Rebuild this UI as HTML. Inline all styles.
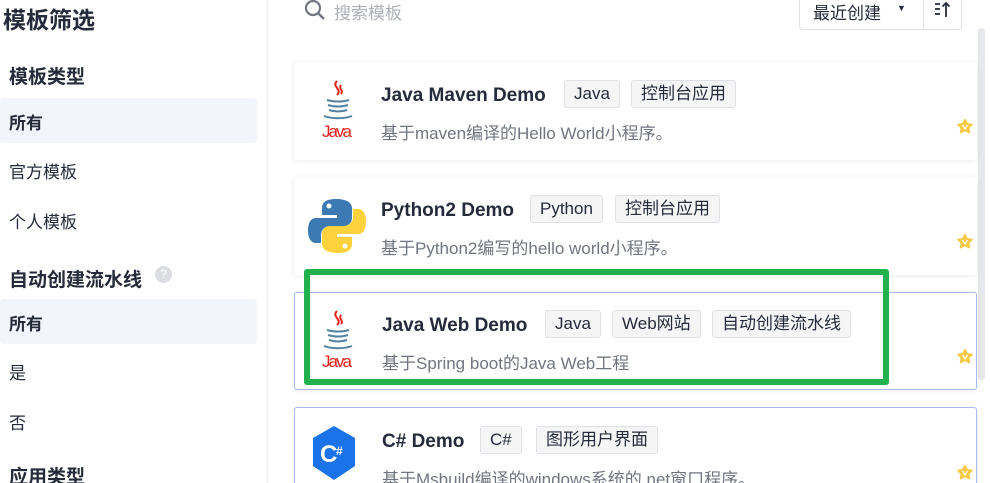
<!DOCTYPE html>
<html><head><meta charset="utf-8"><style>
*{margin:0;padding:0;box-sizing:border-box}
html,body{width:990px;height:483px;overflow:hidden}
body{background:#fff;font-family:"Liberation Sans","Noto Sans CJK SC",sans-serif;color:#252b3a;position:relative}
.a{position:absolute;white-space:nowrap}
.side{left:0;top:0;width:268px;height:483px;border-right:1px solid #eceef2}
.h1{font-size:23px;font-weight:bold;left:3px;top:1px;color:#252b3a}
.h2{font-size:19px;font-weight:bold;left:9px;color:#252b3a}
.it{font-size:17px;left:9px;color:#252b3a}
.sel{left:0;width:257px;height:45px;background:#f2f5fc;border-radius:4px}
.card{left:294px;width:683px;height:98px;background:#fff;border-radius:3px;box-shadow:0 1px 6px rgba(0,0,0,.08)}
.t{font-size:19px;font-weight:bold;left:87px;top:23px;color:#252b3a}
.d{font-size:17px;left:87px;top:57px;color:#71757f}
.tag{position:absolute;top:18px;height:28px;line-height:26px;padding:0 9px;font-size:17px;border:1px solid #dfe1e6;background:#f5f5f6;border-radius:3px;color:#252b3a}
.star{position:absolute;left:662px;top:56px;width:18px;height:18px}
</style></head><body>
<div class="a side"></div>
<div class="a h1">模板筛选</div>
<div class="a h2" style="top:62px">模板类型</div>
<div class="a sel" style="top:98px"></div>
<div class="a it" style="top:109px;font-weight:bold">所有</div>
<div class="a it" style="top:158px">官方模板</div>
<div class="a it" style="top:208px">个人模板</div>
<div class="a h2" style="top:265px">自动创建流水线</div>
<div class="a" style="left:155px;top:266px;width:17px;height:17px;border-radius:50%;background:#dcdde0;color:#fff;font-size:12px;text-align:center;line-height:17px">?</div>
<div class="a sel" style="top:299px"></div>
<div class="a it" style="top:310px;font-weight:bold">所有</div>
<div class="a it" style="top:359px">是</div>
<div class="a it" style="top:409px">否</div>
<div class="a h2" style="top:462px">应用类型</div>

<svg class="a" style="left:304px;top:0" width="22" height="22" viewBox="0 0 22 22"><circle cx="9" cy="8" r="7" fill="none" stroke="#71757f" stroke-width="2.2"/><line x1="14" y1="13" x2="20" y2="19" stroke="#71757f" stroke-width="2.4"/></svg>
<div class="a" style="left:334px;top:-1px;font-size:17px;color:#adb0b8">搜索模板</div>
<div class="a" style="left:799px;top:-4px;width:163px;height:34px;border:1px solid #dfe1e6;border-radius:4px"></div>
<div class="a" style="left:923px;top:-4px;width:1px;height:34px;background:#dfe1e6"></div>
<div class="a" style="left:813px;top:-1px;font-size:17px">最近创建</div>
<div class="a" style="left:897px;top:3px;font-size:9px">▼</div>
<svg class="a" style="left:933px;top:1px" width="20" height="18" viewBox="0 0 20 18"><g stroke="#252b3a" stroke-width="1.8" fill="none"><line x1="2" y1="3" x2="7" y2="3"/><line x1="2" y1="8" x2="7" y2="8"/><line x1="2" y1="13" x2="7" y2="13"/><line x1="13" y1="2" x2="13" y2="16"/><polyline points="9.5,5.5 13,2 16.5,5.5"/></g></svg>
<div class="a" style="left:978px;top:28px;width:7px;height:352px;background:#e6e8ec;border-radius:3px"></div>

<div class="a card" style="top:62px">
<svg class="a" style="left:26px;top:17px" width="36" height="62" viewBox="0 0 36 62"><path d="M17 2c-6 6 6 8 0 14M21 6c-3 4 3 5 0 9" stroke="#e2231a" stroke-width="2" fill="none"/><path d="M7 21c6 2 16 2 22 0M8 26c6 2 14 2 20 0M9 31c6 2 12 2 18 0M4 37c8 3 20 3 28 0" stroke="#5382a1" stroke-width="2" fill="none"/><text x="2" y="58" font-size="17" font-family="Liberation Sans Narrow,Liberation Sans" fill="#e2231a" textLength="30">Java</text></svg>
<div class="a t">Java Maven Demo</div>
<span class="tag" style="left:270px">Java</span><span class="tag" style="left:337px">控制台应用</span>
<div class="a d">基于maven编译的Hello World小程序。</div>
<svg class="star" viewBox="0 0 18 18"><path d="M9 1.5l2.3 4.3 4.8.7-3.4 3.4.8 4.8L9 12.4 4.5 14.7l.8-4.8L1.9 6.5l4.8-.7z" fill="#f7c948" stroke="#f7c948" stroke-width="1.5" stroke-linejoin="round"/><path d="M6.5 7l2.5 4 2.5-4" stroke="#fff" stroke-width="1.2" fill="none"/></svg>
</div>
<div class="a card" style="top:177px">
<svg class="a" style="left:13px;top:19px" width="60" height="60" viewBox="0 0 60 60"><path d="M29 3c-12 0-14 5-14 9v7h15v3H9c-6 0-8 6-8 13s3 12 8 12h5v-8c0-5 4-9 9-9h14c4 0 8-3 8-8V12c0-5-5-9-16-9z" fill="#3d7ab4"/><circle cx="22" cy="10" r="2.5" fill="#fff"/><path d="M31 57c12 0 14-5 14-9v-7H30v-3h21c6 0 8-6 8-13s-3-12-8-12h-5v8c0 5-4 9-9 9H23c-4 0-8 3-8 8v10c0 5 5 9 16 9z" fill="#fdd23c"/><circle cx="38" cy="50" r="2.5" fill="#fff"/></svg>
<div class="a t">Python2 Demo</div>
<span class="tag" style="left:236px">Python</span><span class="tag" style="left:321px">控制台应用</span>
<div class="a d">基于Python2编写的hello world小程序。</div>
<svg class="star" viewBox="0 0 18 18"><path d="M9 1.5l2.3 4.3 4.8.7-3.4 3.4.8 4.8L9 12.4 4.5 14.7l.8-4.8L1.9 6.5l4.8-.7z" fill="#f7c948" stroke="#f7c948" stroke-width="1.5" stroke-linejoin="round"/><path d="M6.5 7l2.5 4 2.5-4" stroke="#fff" stroke-width="1.2" fill="none"/></svg>
</div>
<div class="a card" style="top:292px;border:1px solid #aab8f0">
<svg class="a" style="left:25px;top:16px" width="36" height="62" viewBox="0 0 36 62"><path d="M17 2c-6 6 6 8 0 14M21 6c-3 4 3 5 0 9" stroke="#e2231a" stroke-width="2" fill="none"/><path d="M7 21c6 2 16 2 22 0M8 26c6 2 14 2 20 0M9 31c6 2 12 2 18 0M4 37c8 3 20 3 28 0" stroke="#5382a1" stroke-width="2" fill="none"/><text x="2" y="58" font-size="17" font-family="Liberation Sans" fill="#e2231a" textLength="30">Java</text></svg>
<div class="a t" style="left:87px;top:22px">Java Web Demo</div>
<span class="tag" style="left:250px;top:17px">Java</span><span class="tag" style="left:317px;top:17px">Web网站</span><span class="tag" style="left:417px;top:17px">自动创建流水线</span>
<div class="a d" style="top:56px">基于Spring boot的Java Web工程</div>
<svg class="star" style="top:55px;left:661px" viewBox="0 0 18 18"><path d="M9 1.5l2.3 4.3 4.8.7-3.4 3.4.8 4.8L9 12.4 4.5 14.7l.8-4.8L1.9 6.5l4.8-.7z" fill="#f7c948" stroke="#f7c948" stroke-width="1.5" stroke-linejoin="round"/><path d="M6.5 7l2.5 4 2.5-4" stroke="#fff" stroke-width="1.2" fill="none"/></svg>
</div>
<div class="a card" style="top:407px;border:1px solid #aab8f0;border-bottom:none;height:90px">
<svg class="a" style="left:16px;top:17px" width="46" height="56" viewBox="0 0 46 56"><path d="M23 1l21 12v28L23 55 2 41V13z" fill="#1a73e8"/><text x="9" y="37" font-size="24" font-weight="bold" font-family="Liberation Sans" fill="#fff">C</text><text x="25" y="30" font-size="12" font-weight="bold" font-family="Liberation Sans" fill="#fff">#</text></svg>
<div class="a t" style="left:87px">C# Demo</div>
<span class="tag" style="left:185px">C#</span><span class="tag" style="left:241px">图形用户界面</span>
<div class="a d">基于Msbuild编译的windows系统的.net窗口程序。</div>
<svg class="star" style="left:661px" viewBox="0 0 18 18"><path d="M9 1.5l2.3 4.3 4.8.7-3.4 3.4.8 4.8L9 12.4 4.5 14.7l.8-4.8L1.9 6.5l4.8-.7z" fill="#f7c948" stroke="#f7c948" stroke-width="1.5" stroke-linejoin="round"/><path d="M6.5 7l2.5 4 2.5-4" stroke="#fff" stroke-width="1.2" fill="none"/></svg>
</div>
<div class="a" style="left:304px;top:269px;width:585px;height:116px;border:6px solid #22b14c;border-radius:3px"></div>
</body></html>
